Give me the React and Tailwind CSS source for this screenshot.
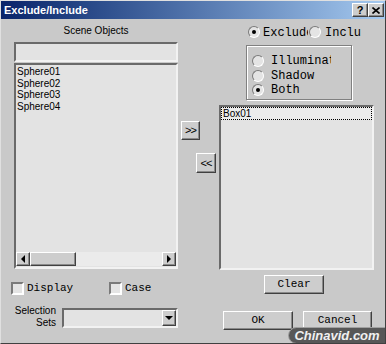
const raised =
  "border border-t-white border-l-white border-r-[#404040] border-b-[#404040] shadow-[inset_-1px_-1px_#8a8a8a] bg-[#cdcdcd]";
const sunken =
  "border-2 border-t-[#6a6a6a] border-l-[#6a6a6a] border-r-[#f2f2f2] border-b-[#f2f2f2]";
const mono = "font-['Liberation_Mono',monospace]";
const sans = "font-['Liberation_Sans',Arial,sans-serif]";

function Radio({ checked }) {
  return (
    <span className="relative inline-block w-[12px] h-[12px] shrink-0 rounded-full bg-[#e4e4e4] border border-t-[#7a7a7a] border-l-[#7a7a7a] border-r-white border-b-white">
      {checked && (
        <span className="absolute left-[3px] top-[3px] w-[4px] h-[4px] rounded-full bg-black" />
      )}
    </span>
  );
}

function Check({ label, width }) {
  return (
    <div className={`flex items-center gap-[3px] ${width}`}>
      <span className="w-[13px] h-[13px] shrink-0 bg-[#e4e4e4] border-2 border-t-[#7a7a7a] border-l-[#7a7a7a] border-r-white border-b-white" />
      <span className={`${mono} text-[11px] leading-[13px] text-black`}>{label}</span>
    </div>
  );
}

function Arrow({ dir }) {
  const pts = {
    left: "5,1 5,9 1,5",
    right: "1,1 1,9 5,5",
    down: "1,2 9,2 5,6",
  };
  return (
    <svg width={dir === "down" ? 10 : 6} height={dir === "down" ? 8 : 10}>
      <polygon points={pts[dir]} fill="black" />
    </svg>
  );
}

const sceneObjects = ["Sphere01", "Sphere02", "Sphere03", "Sphere04"];

export default function App() {
  return (
    <div className="relative w-[386px] h-[344px] overflow-hidden bg-[#c9c9c9] border border-t-[#e0e0e0] border-l-[#e0e0e0] border-r-[#404040] border-b-[#404040] flex flex-col text-black">
      {/* title bar */}
      <div className="h-[18px] shrink-0 flex items-start justify-between bg-gradient-to-r from-[#0a246a] to-[#a6caf0]">
        <span className={`${sans} font-bold text-[11px] leading-[18px] text-white pl-[3px]`}>
          Exclude/Include
        </span>
        <div className="flex mt-[2px] mr-[1px]">
          <div className={`${raised} w-[16px] h-[14px] flex items-center justify-center`}>
            <span className={`${sans} font-bold text-[11px] leading-[11px]`}>?</span>
          </div>
          <div className={`${raised} w-[16px] h-[14px] flex items-center justify-center`}>
            <svg width="8" height="7">
              <path d="M0.5 0.5 L7.5 6.5 M7.5 0.5 L0.5 6.5" stroke="black" strokeWidth="1.6" />
            </svg>
          </div>
        </div>
      </div>

      {/* top section */}
      <div className="flex items-start pl-[13px]">
        {/* scene objects */}
        <div className="w-[164px] flex flex-col">
          <div className={`${sans} mt-[6px] h-[12px] text-center text-[10px] leading-[12px]`}>
            Scene Objects
          </div>
          <div className={`${sunken} mt-[5px] h-[20px] bg-[#e3e3e3]`} />
          <div className={`${sunken} mt-[1px] h-[206px] bg-[#e3e3e3] flex flex-col`}>
            <div className={`${sans} flex-1 pt-[1px] pl-[1px] text-[10px] leading-[11.5px]`}>
              {sceneObjects.map((o) => (
                <div key={o}>{o}</div>
              ))}
            </div>
            <div className="h-[14px] flex bg-[#ebebeb] mb-[1px]">
              <div className={`${raised} w-[14px] flex items-center justify-center`}>
                <Arrow dir="left" />
              </div>
              <div className={`${raised} w-[46px]`} />
              <div className="flex-1" />
              <div className={`${raised} w-[14px] flex items-center justify-center`}>
                <Arrow dir="right" />
              </div>
            </div>
          </div>
        </div>

        {/* move buttons */}
        <div className="w-[41px] flex flex-col">
          <div className={`${raised} ${sans} mt-[102px] ml-[3px] w-[19px] h-[19px] flex items-center justify-center text-[11px] tracking-[-1px]`}>
            &gt;&gt;
          </div>
          <div className={`${raised} ${sans} mt-[13px] ml-[18px] w-[20px] h-[20px] flex items-center justify-center text-[11px] tracking-[-1px]`}>
            &lt;&lt;
          </div>
        </div>

        {/* exclude list */}
        <div className="w-[155px] flex flex-col">
          <div className={`${mono} mt-[8px] h-[12px] flex items-center text-[12px] leading-[12px]`}>
            <span className="ml-[29px]">
              <Radio checked />
            </span>
            <span className="ml-[3px] w-[45px] overflow-hidden whitespace-nowrap">Exclude</span>
            <span className="ml-[1px]">
              <Radio />
            </span>
            <span className="ml-[4px] w-[36px] overflow-hidden whitespace-nowrap">Include</span>
          </div>
          <div className="ml-[27px] mt-[6px] w-[106px] h-[55px] border border-[#808080] shadow-[1px_1px_0_white,inset_1px_1px_0_white] flex flex-col pt-[8px]">
            {[
              ["Illuminate", false],
              ["Shadow", false],
              ["Both", true],
            ].map(([t, c]) => (
              <div key={t} className={`${mono} h-[14.5px] flex items-center text-[12px] leading-[12px] pl-[5px]`}>
                <Radio checked={c} />
                <span className="ml-[7px] w-[60px] overflow-hidden whitespace-nowrap">{t}</span>
              </div>
            ))}
          </div>
          <div className={`${sunken} mt-[5px] h-[165px] bg-[#e3e3e3]`}>
            <div className={`${sans} h-[13px] border border-dotted border-black bg-[#ececec] pl-[1px] text-[10px] leading-[11px]`}>
              Box01
            </div>
          </div>
        </div>
      </div>

      {/* checkbox row */}
      <div className="flex items-start pl-[10px]">
        <div className="mt-[12px] flex">
          <Check label="Display" width="w-[98px]" />
          <Check label="Case" width="w-[155px]" />
        </div>
        <div className={`${raised} ${mono} mt-[5px] w-[60px] h-[19px] flex items-center justify-center text-[11px]`}>
          Clear
        </div>
      </div>

      {/* bottom row */}
      <div className="flex items-start pl-[10px]">
        <div className={`${sans} mt-[10px] w-[45px] text-right text-[10px] leading-[11.5px]`}>
          <div>Selection</div>
          <div>Sets</div>
        </div>
        <div className={`${sunken} mt-[13px] ml-[6px] w-[116px] h-[20px] bg-[#e3e3e3] flex justify-end`}>
          <div className={`${raised} w-[14px] h-[16px] flex items-center justify-center`}>
            <Arrow dir="down" />
          </div>
        </div>
        <div className={`${raised} ${mono} mt-[16px] ml-[45px] w-[70px] h-[19px] flex items-center justify-center text-[11px]`}>
          OK
        </div>
        <div className={`${raised} ${mono} mt-[16px] ml-[10px] w-[69px] h-[19px] flex items-center justify-center text-[11px]`}>
          Cancel
        </div>
      </div>

      {/* watermark */}
      <div className="absolute right-[-1px] bottom-[-1px] w-[98px] h-[17px] rounded-l-full bg-[#575757] border border-[#a0a0a0] flex items-center justify-center">
        <span className={`${sans} italic font-bold text-[13px] leading-[15px] text-[#f0f0f0]`}>
          Chinavid.com
        </span>
      </div>
    </div>
  );
}
